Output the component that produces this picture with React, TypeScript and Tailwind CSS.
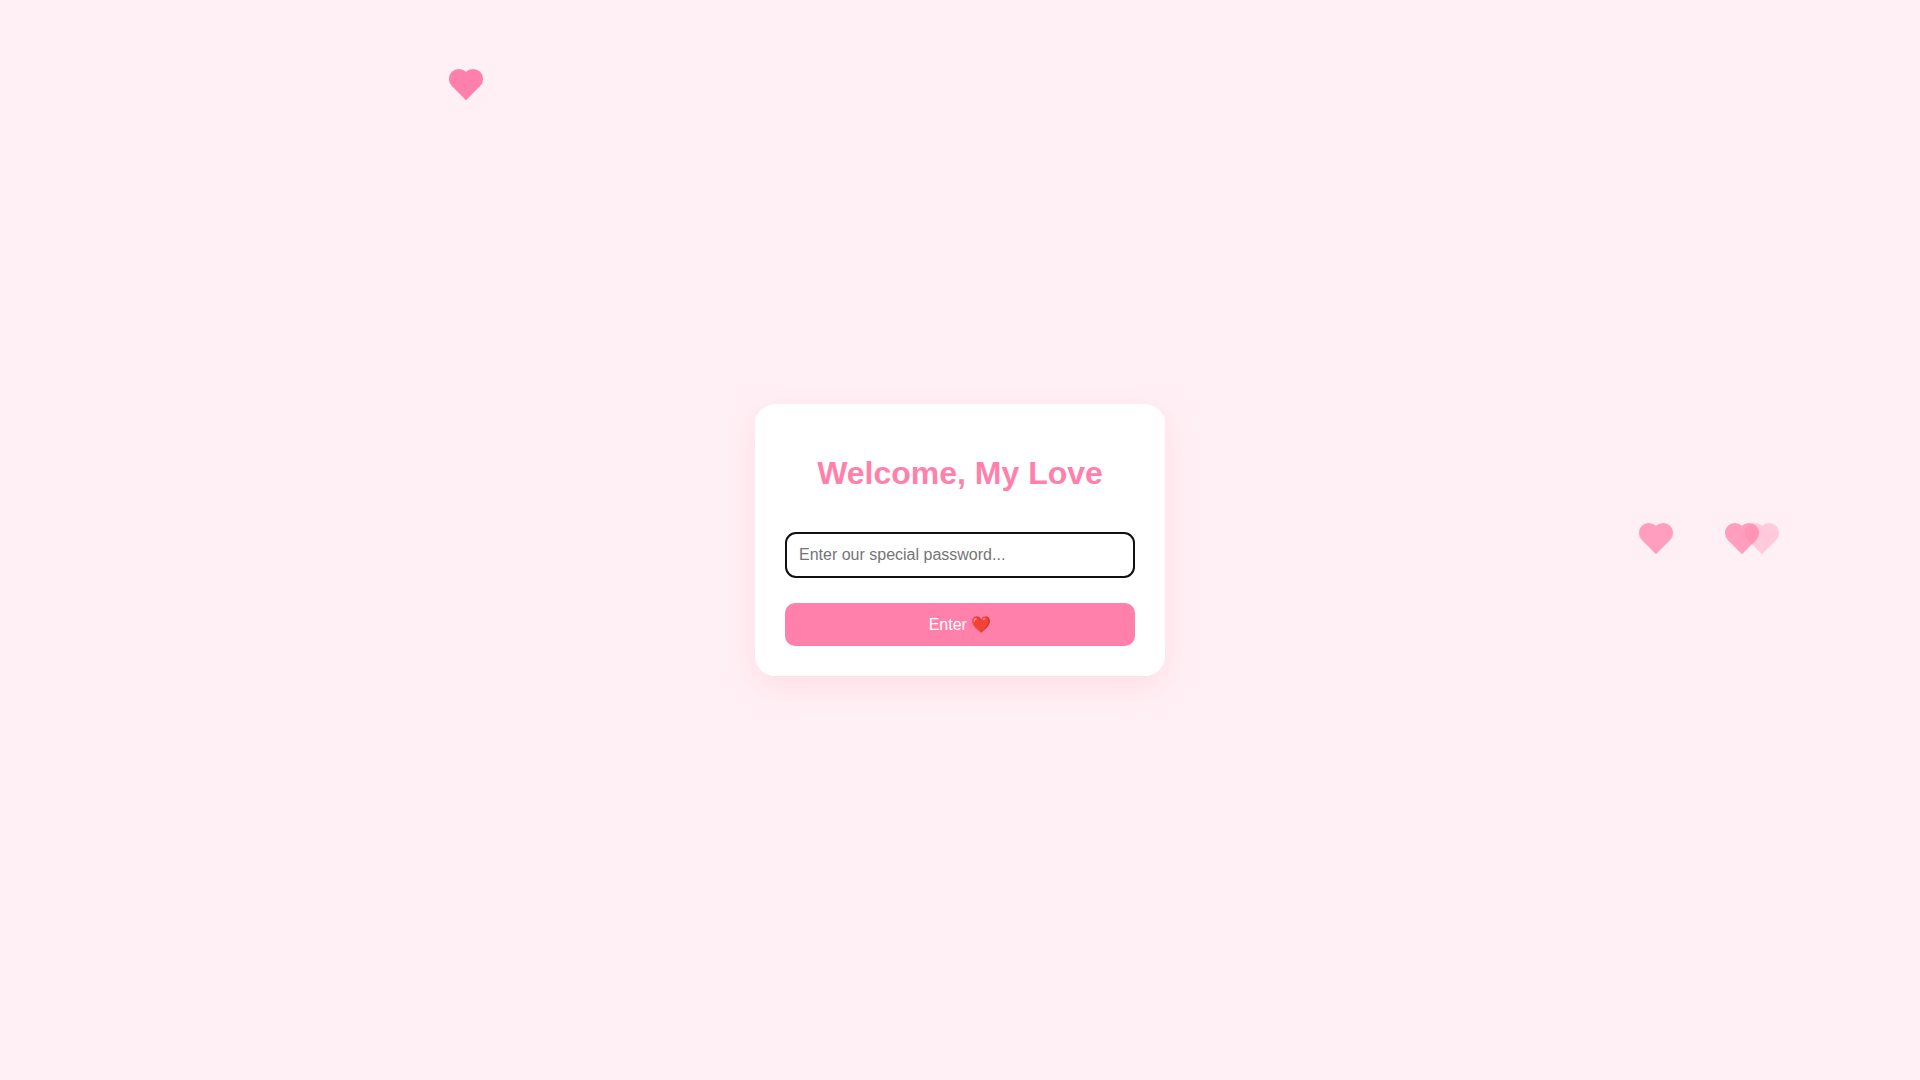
import { useState } from "react"

type FloatingHeart = {
  id: number
  left: number
  top: number
  opacity: number
}

// left and top are percentages of the window
const hearts: FloatingHeart[] = [
  { id: 1, left: 24.271, top: 7.963, opacity: 1 },
  { id: 2, left: 86.25, top: 50, opacity: 0.73 },
  { id: 3, left: 90.729, top: 50, opacity: 0.73 },
  { id: 4, left: 91.771, top: 50, opacity: 0.33 },
]

const Heart = ({ left, top, opacity }: Omit<FloatingHeart, "id">) => (
  <svg
    viewBox="-20 -20 40 40"
    className="absolute size-10 -translate-1/2 fill-[#ff80ab]"
    style={{ left: `${left}%`, top: `${top}%`, opacity }}
  >
    <g transform="rotate(-45)">
      <rect x="-10" y="-10" width="20" height="20" />
      <circle cx="0" cy="-10" r="10" />
      <circle cx="10" cy="0" r="10" />
    </g>
  </svg>
)

const App = () => {
  const [password, setPassword] = useState("")

  return (
    <main className="relative flex min-h-screen items-center justify-center overflow-hidden bg-[#fff0f5] font-['Liberation_Sans',Arial,sans-serif]">
      <div className="pointer-events-none absolute inset-0" aria-hidden="true">
        {hearts.map((heart) => (
          <Heart key={heart.id} left={heart.left} top={heart.top} opacity={heart.opacity} />
        ))}
      </div>

      <form
        className="relative w-full max-w-[410px] rounded-[20px] bg-white p-[30px] text-center shadow-[0_10px_30px_rgba(255,182,193,0.3)]"
        onSubmit={(e) => e.preventDefault()}
      >
        <h1 className="mt-5 mb-10 text-[32px] leading-[38px] font-bold text-[#ff80ab]">Welcome, My Love</h1>
        <input
          type="password"
          aria-label="Password"
          placeholder="Enter our special password..."
          value={password}
          onChange={(e) => setPassword(e.target.value)}
          className="block w-full rounded-[11px] border-2 border-[#101010] bg-white p-3 text-base leading-[18px] outline-none placeholder:text-[#757575]"
        />
        <button
          type="submit"
          className="mt-[25px] block w-full cursor-pointer rounded-[10px] bg-[#ff80ab] p-3 text-base leading-[19px] text-white"
        >
          Enter ❤️
        </button>
      </form>
    </main>
  )
}

export default App
